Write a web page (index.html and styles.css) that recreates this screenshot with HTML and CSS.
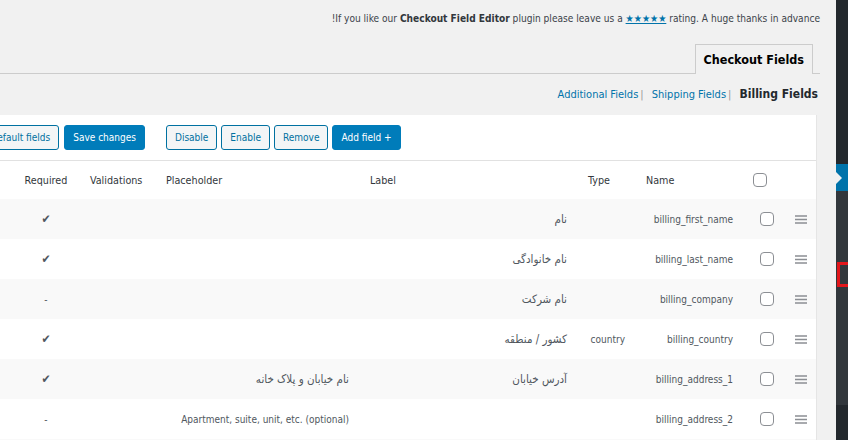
FILE: index.html
```html
<!DOCTYPE html>
<html lang="fa" dir="rtl">
	<head>
		<meta charset="UTF-8">
		<meta name="viewport" content="width=device-width, initial-scale=1">
		<link rel="stylesheet" href="styles.css">
	</head>

	<body>
		<div class="admin">
			<div class="adminMenu">
				<div class="menuTop"></div>
				<div class="menuCurrent"></div>
				<div class="subMenu">
					<div class="subMenuMark"></div>
				</div>
			</div>

			<div class="wpContent">
				<p class="notice" dir="ltr">!If you like our <b>Checkout Field Editor</b> plugin please leave us a <a href="#">★★★★★</a> rating. A huge thanks in advance</p>

				<div class="navTabs">
					<a class="navTab" href="#">Checkout Fields</a>
				</div>

				<div class="sectionLinks" dir="ltr">
					<a href="#">Additional Fields</a><span class="sep">|</span>
					<a href="#">Shipping Fields</a><span class="sep">|</span>
					<b>Billing Fields</b>
				</div>

				<div class="panel">
					<table class="fieldsTable">
						<colgroup>
							<col class="wSort">
							<col class="wCheck">
							<col class="wName">
							<col class="wType">
							<col class="wLabel">
							<col class="wPlaceholder">
							<col class="wValidations">
							<col class="wRequired">
							<col class="wEnabled">
							<col class="wEdit">
						</colgroup>
						<thead>
							<tr class="toolbar">
								<th colspan="6">
									<div class="toolbarMain">
										<button class="button buttonPrimary" dir="ltr">Add field +</button>
										<button class="button">Remove</button>
										<button class="button">Enable</button>
										<button class="button">Disable</button>
									</div>
								</th>
								<th colspan="4">
									<div class="toolbarSave">
										<button class="button buttonPrimary">Save changes</button>
										<button class="button">Reset to default fields</button>
									</div>
								</th>
							</tr>
							<tr class="heads">
								<th></th>
								<th class="headCheck"><input type="checkbox" class="check"></th>
								<th>Name</th>
								<th>Type</th>
								<th>Label</th>
								<th>Placeholder</th>
								<th>Validations</th>
								<th class="center">Required</th>
								<th class="center">Enabled</th>
								<th class="center">Edit</th>
							</tr>
						</thead>
						<tbody>
							<tr>
								<td class="sort"><svg width="12" height="9" viewBox="0 0 12 9"><path d="M0 1h12M0 4.5h12M0 8h12" stroke="#8c8f94" stroke-width="1.4"/></svg></td>
								<td class="center"><input type="checkbox" class="check"></td>
								<td>billing_first_name</td>
								<td></td>
								<td class="fa">نام</td>
								<td></td>
								<td></td>
								<td class="center yes">✔</td>
								<td class="center yes">✔</td>
								<td></td>
							</tr>
							<tr>
								<td class="sort"><svg width="12" height="9" viewBox="0 0 12 9"><path d="M0 1h12M0 4.5h12M0 8h12" stroke="#8c8f94" stroke-width="1.4"/></svg></td>
								<td class="center"><input type="checkbox" class="check"></td>
								<td>billing_last_name</td>
								<td></td>
								<td class="fa">نام خانوادگی</td>
								<td></td>
								<td></td>
								<td class="center yes">✔</td>
								<td class="center yes">✔</td>
								<td></td>
							</tr>
							<tr>
								<td class="sort"><svg width="12" height="9" viewBox="0 0 12 9"><path d="M0 1h12M0 4.5h12M0 8h12" stroke="#8c8f94" stroke-width="1.4"/></svg></td>
								<td class="center"><input type="checkbox" class="check"></td>
								<td>billing_company</td>
								<td></td>
								<td class="fa">نام شرکت</td>
								<td></td>
								<td></td>
								<td class="center no">-</td>
								<td class="center yes">✔</td>
								<td></td>
							</tr>
							<tr>
								<td class="sort"><svg width="12" height="9" viewBox="0 0 12 9"><path d="M0 1h12M0 4.5h12M0 8h12" stroke="#8c8f94" stroke-width="1.4"/></svg></td>
								<td class="center"><input type="checkbox" class="check"></td>
								<td>billing_country</td>
								<td>country</td>
								<td class="fa">کشور / منطقه</td>
								<td></td>
								<td></td>
								<td class="center yes">✔</td>
								<td class="center yes">✔</td>
								<td></td>
							</tr>
							<tr>
								<td class="sort"><svg width="12" height="9" viewBox="0 0 12 9"><path d="M0 1h12M0 4.5h12M0 8h12" stroke="#8c8f94" stroke-width="1.4"/></svg></td>
								<td class="center"><input type="checkbox" class="check"></td>
								<td>billing_address_1</td>
								<td></td>
								<td class="fa">آدرس خیابان</td>
								<td class="fa">نام خیابان و پلاک خانه</td>
								<td></td>
								<td class="center yes">✔</td>
								<td class="center yes">✔</td>
								<td></td>
							</tr>
							<tr>
								<td class="sort"><svg width="12" height="9" viewBox="0 0 12 9"><path d="M0 1h12M0 4.5h12M0 8h12" stroke="#8c8f94" stroke-width="1.4"/></svg></td>
								<td class="center"><input type="checkbox" class="check"></td>
								<td>billing_address_2</td>
								<td></td>
								<td></td>
								<td>Apartment, suite, unit, etc. (optional)</td>
								<td></td>
								<td class="center no">-</td>
								<td class="center yes">✔</td>
								<td></td>
							</tr>
							<tr>
								<td class="sort"></td>
								<td></td>
								<td></td>
								<td></td>
								<td></td>
								<td></td>
								<td></td>
								<td></td>
								<td></td>
								<td></td>
							</tr>
						</tbody>
					</table>
				</div>
			</div>
		</div>
	</body>
</html>
```

FILE: styles.css
```css
body {
	margin: 0;
	background-color: #f1f1f1;
	font-family: "DejaVu Sans Condensed", "DejaVu Sans", sans-serif;
	font-size: 10px;
	color: #444;
}

.admin {
	display: flex;
	height: 440px;
	overflow: hidden;
}

/*---------------------------ADMIN MENU---------------------------*/
.adminMenu {
	flex: none;
	width: 12px;
	background-color: #23282d;
}

.menuTop {
	height: 164px;
}

.menuCurrent {
	position: relative;
	height: 27px;
	background-color: #0073aa;
}

/* notch pointing into the menu */
.menuCurrent::before {
	content: "";
	position: absolute;
	left: 0;
	top: 8px;
	border-top: 6px solid transparent;
	border-bottom: 6px solid transparent;
	border-left: 6px solid #f1f1f1;
}

.subMenu {
	height: 214px;
	padding-top: 71px;
	box-sizing: border-box;
	background-color: #32373c;
}

.subMenuMark {
	height: 19px;
	margin-right: -4px;
	margin-left: 1px;
	border: 3px solid #e2161b;
}

/*---------------------------CONTENT---------------------------*/
.wpContent {
	flex: 1;
	min-width: 0;
	overflow: hidden;
}

.notice {
	margin: 0 16px 0 0;
	padding-top: 11px;
	line-height: 15px;
	font-size: 10.1px;
	text-align: right;
	color: #3c434a;
}

.notice b {
	color: #32373c;
}

.notice a {
	color: #0073aa;
}

.navTabs {
	margin: 18px 16px 0 0;
	height: 29px;
	border-bottom: 1px solid #ccc;
}

.navTab {
	display: inline-block;
	margin-right: 7px;
	padding: 0 8px;
	height: 29px;
	line-height: 29px;
	border: 1px solid #ccc;
	border-bottom: none;
	background-color: #f1f1f1;
	color: #000;
	font-size: 12.5px;
	font-weight: bold;
	text-decoration: none;
}

.sectionLinks {
	margin: 12px 18px 0 0;
	line-height: 16px;
	text-align: right;
	font-size: 11px;
}

.sectionLinks a {
	color: #0073aa;
	text-decoration: none;
}

.sectionLinks .sep {
	margin: 0 5px 0 2px;
	color: #999;
}

.sectionLinks b {
	font-size: 12px;
	color: #23282d;
}

.panel {
	margin: 12px 19px 0 0;
	height: 400px;
	background-color: #fff;
	border-right: 1px solid #e5e5e5;
}

/*---------------------------TABLE---------------------------*/
.fieldsTable {
	width: 948px;
	table-layout: fixed;
	border-collapse: collapse;
}

.wSort { width: 31px; }
.wCheck { width: 37px; }
.wName { width: 108px; }
.wType { width: 58px; }
.wLabel { width: 218px; }
.wPlaceholder { width: 204px; }
.wValidations { width: 76px; }
.wRequired { width: 76px; }
.wEnabled { width: 70px; }
.wEdit { width: 70px; }

.toolbar th {
	height: 45px;
	padding: 0 6px;
	border-bottom: 1px solid #e1e1e1;
}

.toolbarMain {
	display: flex;
	justify-content: flex-end;
	gap: 4px;
}

.toolbarSave {
	display: flex;
	gap: 5px;
	padding-right: 9px;
}

.button {
	height: 25px;
	padding: 0 8px;
	border: 1px solid #0071a1;
	border-radius: 3px;
	background-color: #f3f5f6;
	color: #0071a1;
	font-family: inherit;
	font-size: 10px;
	white-space: nowrap;
	cursor: pointer;
}

.buttonPrimary {
	background-color: #007cba;
	border-color: #007cba;
	color: #fff;
}

.heads th {
	height: 38px;
	padding: 0 6px;
	text-align: left;
	font-weight: normal;
	font-size: 10.7px;
	color: #32373c;
}

.heads .headCheck {
	padding-left: 5px;
}

.heads th.center,
.fieldsTable td.center {
	text-align: center;
}

.fieldsTable td {
	height: 40px;
	padding: 0 15px 0 4px;
	text-align: right;
	white-space: nowrap;
	overflow: hidden;
	color: #50575e;
}

.fieldsTable tbody tr:nth-child(odd) {
	background-color: #f9f9f9;
}

.fieldsTable td.fa {
	font-size: 11.5px;
}

.fieldsTable td.sort {
	padding: 0;
	text-align: center;
}

.fieldsTable td.center {
	padding: 0;
}

.sort svg {
	display: block;
	margin: 1px auto 0;
}

.yes {
	color: #3c434a;
	font-size: 12px;
}

.no {
	color: #a7aaad;
}

.check {
	-webkit-appearance: none;
	appearance: none;
	display: inline-block;
	width: 14px;
	height: 14px;
	margin: 0;
	vertical-align: middle;
	border: 1px solid #8c8f94;
	border-radius: 4px;
	background-color: #fff;
}
```
